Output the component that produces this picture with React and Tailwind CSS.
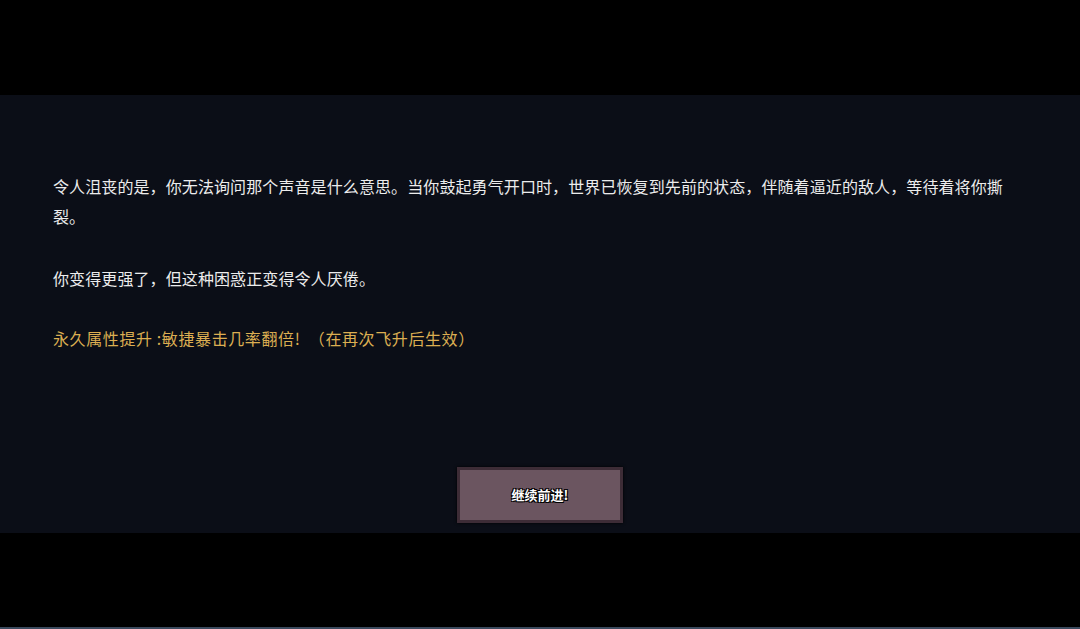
export default function App() {
  const font = { fontFamily: '"Noto Sans CJK SC", "Noto Sans", sans-serif' };

  return (
    <main className="w-[1080px] h-[629px] bg-black flex flex-col overflow-hidden" style={font}>
      <div className="h-[95px] shrink-0" />

      <section className="h-[438px] shrink-0 bg-[#0b0e17] flex flex-col px-[53px] pt-[76px] pb-[10px]">
        <div className="text-[16px] leading-[30px] tracking-[0.1px] text-[#ececec]">
          <p>
            令人沮丧的是，你无法询问那个声音是什么意思。当你鼓起勇气开口时，世界已恢复到先前的状态，伴随着逼近的敌人，等待着将你撕裂。
          </p>
          <p className="mt-[32px]">你变得更强了，但这种困惑正变得令人厌倦。</p>
          <p className="mt-[30px] text-[#dcae52] tracking-[0.6px]">
            永久属性提升 :敏捷暴击几率翻倍!{"\u00a0\u00a0"}（在再次飞升后生效）
          </p>
        </div>

        <div className="mt-auto flex justify-center">
          <button className="w-[166px] h-[56px] bg-[#6b5560] border-[3px] border-[#3d2c36] shadow-[0_0_3px_#000] flex items-center justify-center text-[13px] font-semibold text-white [text-shadow:1px_1px_0_#000,-1px_-1px_0_#000,1px_-1px_0_#000,-1px_1px_0_#000]">
            继续前进!
          </button>
        </div>
      </section>

      <div className="flex-1" />
      <div className="h-[2px] bg-[#3b4a5e] shrink-0" />
    </main>
  );
}
